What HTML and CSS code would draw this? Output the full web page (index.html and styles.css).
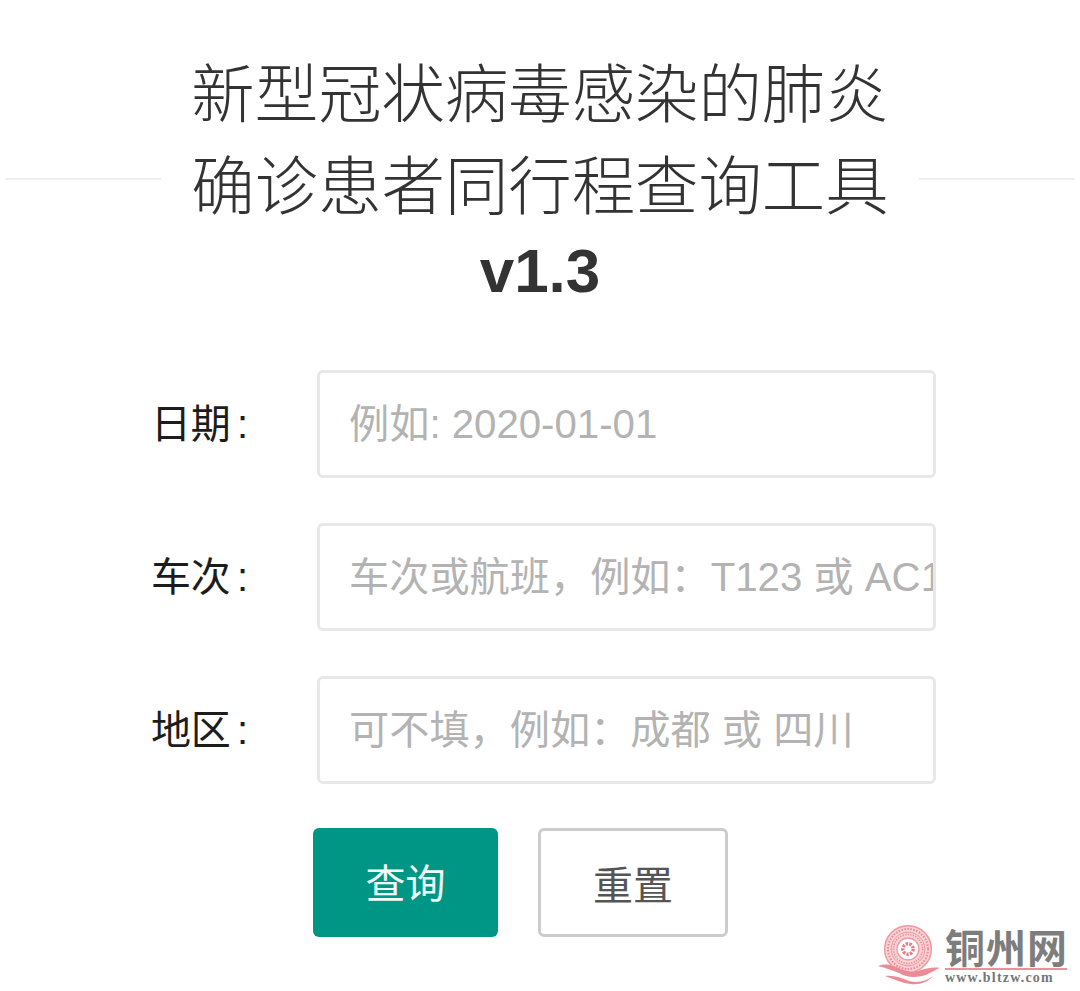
FILE: index.html
```html
<!DOCTYPE html>
<html lang="zh">
<head>
<meta charset="utf-8">
<title>查询工具</title>
<link rel="stylesheet" href="styles.css">
</head>
<body>
<main class="page">
  <header class="head">
    <span class="rule"></span>
    <h1 class="title">新型冠状病毒感染的肺炎<br>确诊患者同行程查询工具<b class="ver">v1.3</b></h1>
    <span class="rule"></span>
  </header>
  <form class="form">
    <div class="row"><label class="label">日期<span class="colon">:</span></label><input class="field" placeholder="例如: 2020-01-01"></div>
    <div class="row"><label class="label">车次<span class="colon">:</span></label><input class="field" placeholder="车次或航班，例如：T123 或 AC1234"></div>
    <div class="row"><label class="label">地区<span class="colon">:</span></label><input class="field" placeholder="可不填，例如：成都 或 四川"></div>
    <div class="btns"><button type="button" class="btn primary">查询</button><button type="button" class="btn plain">重置</button></div>
  </form>
</main>
<div class="mark">
  <svg class="seal" width="66" height="62" viewBox="0 0 66 62">
    <circle cx="32" cy="25" r="24" fill="#f9d2d4"/>
    <circle cx="32" cy="25" r="23.3" fill="none" stroke="#ee9aa2" stroke-width="1.4"/>
    <circle cx="32" cy="25" r="20" fill="none" stroke="#e98a94" stroke-width="2" stroke-dasharray="1.5 1.5"/>
    <circle cx="32" cy="25" r="16.8" fill="none" stroke="#ee9aa2" stroke-width="1"/>
    <circle cx="32" cy="25" r="14.5" fill="none" stroke="#e98a94" stroke-width="1.6" stroke-dasharray="1.2 1.4"/>
    <circle cx="32" cy="25" r="11.5" fill="#fff"/>
    <circle cx="32" cy="25" r="11" fill="none" stroke="#ee9aa2" stroke-width="1.4"/>
    <circle cx="32" cy="25" r="5.2" fill="none" stroke="#e5808c" stroke-width="3.4" stroke-dasharray="2.4 1.2"/>
    <path d="M1 44c8-4 14-2 22 2 6 3 12 4 20 2 8-2 14-4 21-5-5 3-10 7-18 9-9 2-16 1-24-3-7-3-13-5-21-5z" fill="#fff" stroke="#fff" stroke-width="3"/>
    <path d="M2 42c9-3 15-1 23 3 7 3 13 3 20 1 7-2 13-3 19-2-6 2-10 6-18 8-9 2-16 1-23-3-7-3-13-5-21-7z" fill="#ec8a95"/>
    <path d="M9 52c9-1 16 2 24 5 8 2 16 1 24-5-5 6-13 9-22 8-10-1-17-5-26-8z" fill="#ec8a95"/>
  </svg>
  <div class="mark-text"><span class="mark-name">铜州网</span><span class="mark-url">www.bltzw.com</span></div>
</div>
</body>
</html>
```
FILE: styles.css
```css
html,body{margin:0;padding:0;background:#fff}
body{width:1080px;height:991px;overflow:hidden;position:relative;font-family:"Liberation Sans","Noto Sans CJK SC",sans-serif}
.page{padding-top:49px}
.head{display:flex;align-items:center;padding:0 5px;gap:30px}
.rule{flex:1;height:2px;background:#f0f0f0}
.title{margin:0;font-weight:300;font-size:63.4px;line-height:92px;color:#333;text-align:center;white-space:nowrap}
.ver{display:block;font-weight:700;font-size:62px;line-height:76px}
.form{margin-top:61px;display:flex;flex-direction:column}
.row{display:flex;align-items:center;height:108px;margin-bottom:45px}
.label{width:317px;box-sizing:border-box;padding:0 69px 6px 0;text-align:right;font-size:40px;color:#1c1c1c}
.colon{margin-left:6px}
.field{width:619px;height:108px;box-sizing:border-box;border:3px solid #e8e8e8;border-radius:6px;padding:2px 0 0 29px;font-family:inherit;font-size:40.2px;outline:none;background:#fff}
.field::placeholder{color:#b3b3b3;opacity:1}
.btns{display:flex;gap:40px;padding-left:313px;margin-top:-1px}
.btn{height:109px;font-size:40px;border-radius:6px;font-family:inherit;padding:0}
.primary{width:185px;background:#009685;color:#f0faf8;border:0;padding-bottom:4px}
.plain{width:190px;background:#fff;color:#555;border:3px solid #ccc}
.mark{position:absolute;left:876px;top:924px;display:flex;gap:3px}
.mark-text{display:flex;flex-direction:column;align-items:stretch;width:122px}
.mark-name{font-family:"Noto Sans CJK SC",serif;font-weight:700;font-size:40px;line-height:44px;letter-spacing:1px;color:#7d7d7d;border-bottom:2px solid #ee8f99;white-space:nowrap}
.mark-url{font-family:"Liberation Serif",serif;font-weight:700;font-size:14px;line-height:16px;letter-spacing:1.2px;color:#777;white-space:nowrap}
```
